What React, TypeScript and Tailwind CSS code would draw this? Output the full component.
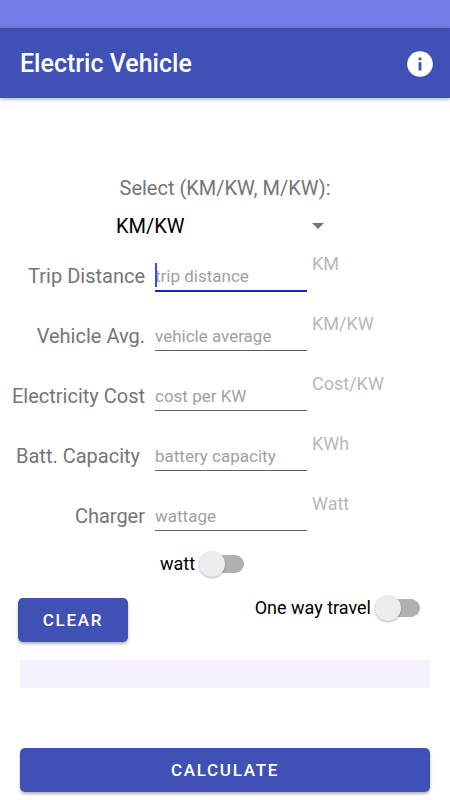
import React, { useState } from 'react';

interface Field {
  id: string;
  label: string;
  placeholder: string;
  unit: string;
}

const FIELDS: Field[] = [
  { id: 'distance', label: 'Trip Distance', placeholder: 'trip distance', unit: 'KM' },
  { id: 'average', label: 'Vehicle Avg.', placeholder: 'vehicle average', unit: 'KM/KW' },
  { id: 'cost', label: 'Electricity Cost', placeholder: 'cost per KW', unit: 'Cost/KW' },
  { id: 'capacity', label: 'Batt. Capacity ', placeholder: 'battery capacity', unit: 'KWh' },
  { id: 'charger', label: 'Charger', placeholder: 'wattage', unit: 'Watt' },
];

const buttonClasses = "h-11 rounded-[5px] bg-[#3f51b5] pt-0.5 text-[17px] font-medium tracking-widest text-white shadow-[0_2px_3px_rgba(0,0,0,0.3)]";

interface FieldRowProps {
  field: Field;
  value: string;
  isActive: boolean;
  onFocus: () => void;
  onChange: (value: string) => void;
}

const FieldRow: React.FC<FieldRowProps> = ({ field, value, isActive, onFocus, onChange }) => (
  <div className="grid h-[60px] grid-cols-[145fr_162fr_143fr] items-start">
    <label htmlFor={field.id} className="whitespace-pre pt-3 text-right text-xl leading-7 text-[#757575]">
      {field.label}
    </label>
    <div className="relative pl-[10px]">
      <input
        id={field.id}
        type="text"
        inputMode="decimal"
        value={value}
        placeholder={field.placeholder}
        onFocus={onFocus}
        onChange={(e) => onChange(e.target.value)}
        className={`block w-full pt-3 text-[17px] leading-7 text-black outline-none placeholder:text-[#a0a0a0] ${isActive ? 'h-[42px] border-b-2 border-[#0a2bb8]' : 'h-[41px] border-b border-[#606060]'}`}
      />
      {isActive && value === '' && <span className="absolute left-[10px] top-[13px] h-6 w-0.5 bg-[#3a50cc]" />}
    </div>
    <span className="pl-[5px] text-lg leading-7 text-[#b8b8b8]">{field.unit}</span>
  </div>
);

interface SwitchProps {
  label: string;
  checked: boolean;
  onChange: (checked: boolean) => void;
}

const Switch: React.FC<SwitchProps> = ({ label, checked, onChange }) => (
  <label className="flex h-7 items-center gap-1 text-lg text-black">
    {label}
    <input
      type="checkbox"
      role="switch"
      checked={checked}
      onChange={(e) => onChange(e.target.checked)}
      className="flex h-[18px] w-[45px] appearance-none items-center rounded-full bg-[#b0b0b0] before:h-[26px] before:w-[26px] before:shrink-0 before:rounded-full before:bg-[#ececec] before:shadow-[0_1px_2px_rgba(0,0,0,0.3)] checked:justify-end checked:bg-[#9fa8da] checked:before:bg-[#3f51b5]"
    />
  </label>
);

const InfoIcon: React.FC = () => (
  <svg viewBox="0 0 26 26" className="h-[26px] w-[26px]" aria-hidden="true">
    <circle cx="13" cy="13" r="12.8" fill="#fff" />
    <path d="M11.6 6.6h2.8v2.6h-2.8zM11.6 11.2h2.8v8.2h-2.8z" fill="#3f51b5" />
  </svg>
);

const App: React.FC = () => {
  const [unit, setUnit] = useState('KM/KW');
  const [values, setValues] = useState<Record<string, string>>({});
  const [activeField, setActiveField] = useState('distance');
  const [isWatt, setIsWatt] = useState(false);
  const [isOneWay, setIsOneWay] = useState(false);
  const [result, setResult] = useState('');

  const handleClear = () => {
    setValues({});
    setResult('');
  };

  const handleCalculate = () => {
    const distance = Number(values.distance);
    const average = Number(values.average);
    if (!distance || !average) return;
    const trips = isOneWay ? 1 : 2;
    setResult(((distance / average) * Number(values.cost || 0) * trips).toFixed(2));
  };

  return (
    <div className="flex min-h-screen flex-col bg-white font-['Roboto',sans-serif]">
      <div className="h-7 bg-[#757de8]" />
      <header className="flex h-[70px] items-center justify-between bg-[#3f51b5] pl-5 pr-[17px] pt-0.5 text-white shadow-[0_1px_4px_rgba(0,0,0,0.35)]">
        <h1 className="text-[25px] font-medium">Electric Vehicle</h1>
        <button type="button" aria-label="Info">
          <InfoIcon />
        </button>
      </header>

      <main className="flex grow flex-col pt-[76px]">
        <label htmlFor="unit" className="text-center text-xl leading-7 text-[#757575]">
          Select (KM/KW, M/KW):
        </label>
        <div className="relative mx-auto mt-2.5 w-[218px]">
          <select
            id="unit"
            value={unit}
            onChange={(e) => setUnit(e.target.value)}
            className="h-7 w-full appearance-none text-xl text-black outline-none"
          >
            <option>KM/KW</option>
            <option>M/KW</option>
          </select>
          <svg viewBox="0 0 12 6" className="pointer-events-none absolute right-[10px] top-[11px] h-1.5 w-3" fill="#757575" aria-hidden="true">
            <path d="M0 0h12L6 6z" />
          </svg>
        </div>

        <div className="mt-2.5">
          {FIELDS.map((field) => (
            <FieldRow
              key={field.id}
              field={field}
              value={values[field.id] || ''}
              isActive={activeField === field.id}
              onFocus={() => setActiveField(field.id)}
              onChange={(value) => setValues({ ...values, [field.id]: value })}
            />
          ))}
        </div>

        <div className="flex pl-40">
          <Switch label="watt" checked={isWatt} onChange={setIsWatt} />
        </div>

        <div className="mt-4 flex items-start justify-between pl-[18px] pr-[30px]">
          <button type="button" onClick={handleClear} className={`${buttonClasses} mt-1 w-[110px]`}>
            CLEAR
          </button>
          <Switch label="One way travel" checked={isOneWay} onChange={setIsOneWay} />
        </div>

        <output className="mx-5 mt-[18px] block h-7 bg-[#f5effe] text-center text-lg text-black">{result}</output>

        <button type="button" onClick={handleCalculate} className={`${buttonClasses} mx-5 mb-2 mt-auto`}>
          CALCULATE
        </button>
      </main>
    </div>
  );
};

export default App;
